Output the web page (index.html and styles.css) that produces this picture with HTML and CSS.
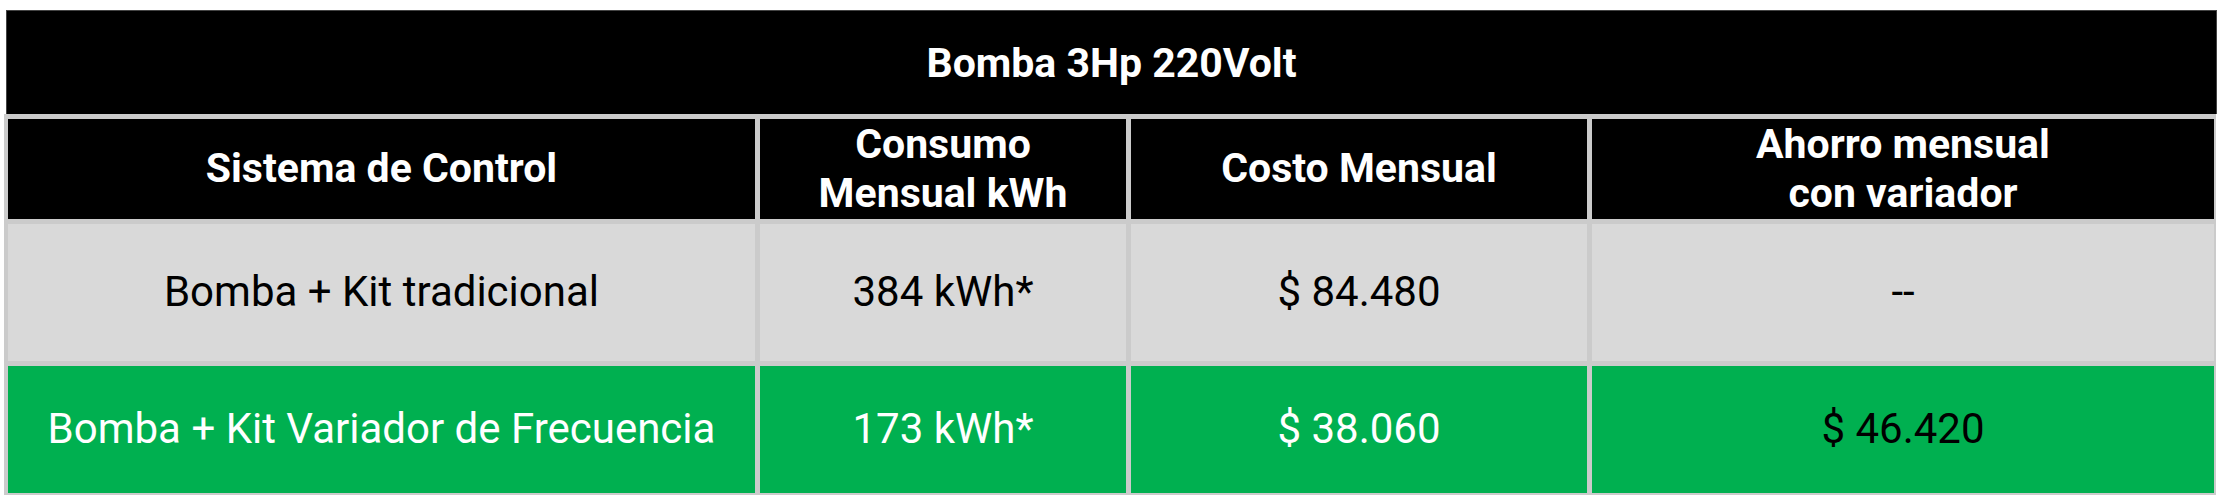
FILE: index.html
```html
<!DOCTYPE html>
<html lang="es">
<head>
<meta charset="utf-8">
<title>Bomba 3Hp 220Volt</title>
<link rel="stylesheet" href="styles.css">
</head>
<body>
<div class="wrap">
  <div class="title">Bomba 3Hp 220Volt</div>
  <div class="grid">
    <div class="cell head">Sistema de Control</div>
    <div class="cell head">Consumo<br>Mensual kWh</div>
    <div class="cell head">Costo Mensual</div>
    <div class="cell head">Ahorro mensual<br>con variador</div>

    <div class="cell gray">Bomba + Kit tradicional</div>
    <div class="cell gray">384 kWh*</div>
    <div class="cell gray">$ 84.480</div>
    <div class="cell gray">--</div>

    <div class="cell green">Bomba + Kit Variador de Frecuencia</div>
    <div class="cell green">173 kWh*</div>
    <div class="cell green">$ 38.060</div>
    <div class="cell green dark">$ 46.420</div>
  </div>
</div>
</body>
</html>
```

FILE: styles.css
```css
html, body {
  margin: 0;
  padding: 0;
  background: #ffffff;
}

body {
  padding: 10px 0 0 4px;
  font-family: Roboto, "Liberation Sans", sans-serif;
  font-size: 41px;
}

.wrap {
  width: 2213px;
  display: flex;
  flex-direction: column;
}

.title {
  margin-left: 2px;
  height: 104px;
  box-sizing: border-box;
  background: #000000;
  border: 1px solid #444444;
  border-bottom: none;
  color: #ffffff;
  font-weight: 700;
  display: flex;
  align-items: center;
  justify-content: center;
}

.grid {
  width: 2212px;
  box-sizing: border-box;
  display: grid;
  grid-template-columns: 747px 366px 456px 622px;
  grid-template-rows: 100px 137px 127px;
  column-gap: 5px;
  row-gap: 5px;
  padding: 5px 2px 2px 4px;
  background: #cbcbcb;
}

.cell {
  display: flex;
  align-items: center;
  justify-content: center;
  text-align: center;
  line-height: 1.2;
}

.head {
  background: #000000;
  color: #ffffff;
  font-weight: 700;
}

.gray {
  background: #d9d9d9;
  color: #000000;
  font-size: 42px;
}

.green {
  background: #00b050;
  color: #ffffff;
  font-size: 42px;
}

.green.dark {
  color: #000000;
}
```
